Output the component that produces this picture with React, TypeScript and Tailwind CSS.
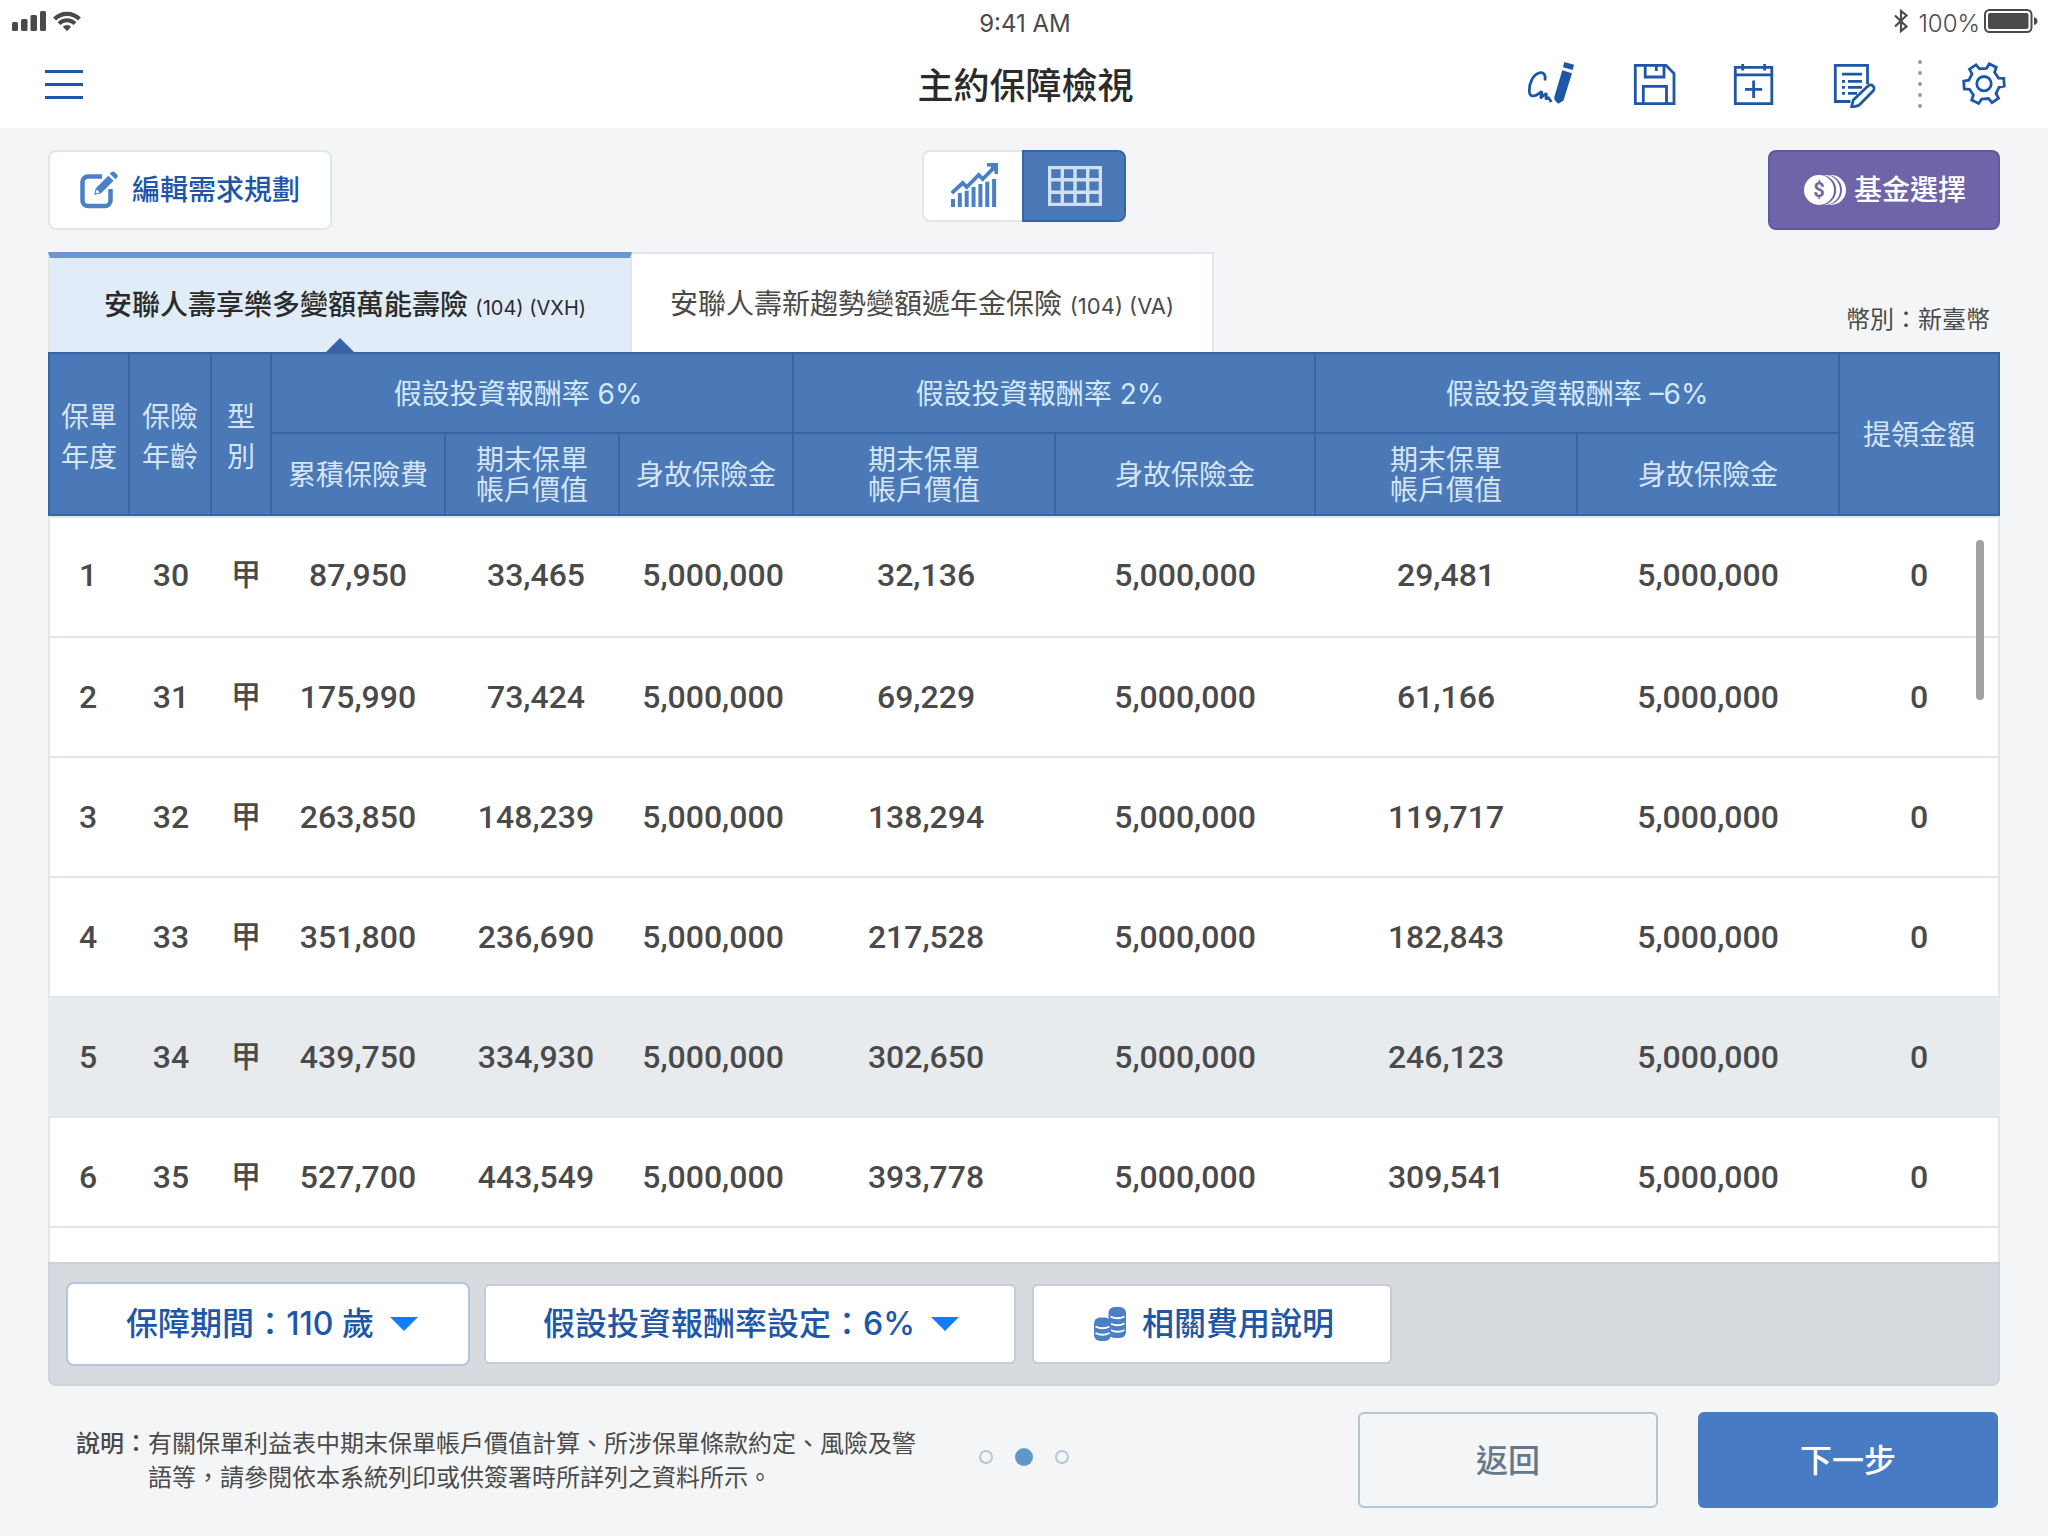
import type { ReactNode } from "react";

type Row = { year: number; age: number; type: string; cells: string[]; active?: boolean };

const DEATH = "5,000,000";

const rows: Row[] = [
  { year: 1, age: 30, type: "甲", cells: ["87,950", "33,465", DEATH, "32,136", DEATH, "29,481", DEATH, "0"] },
  { year: 2, age: 31, type: "甲", cells: ["175,990", "73,424", DEATH, "69,229", DEATH, "61,166", DEATH, "0"] },
  { year: 3, age: 32, type: "甲", cells: ["263,850", "148,239", DEATH, "138,294", DEATH, "119,717", DEATH, "0"] },
  { year: 4, age: 33, type: "甲", cells: ["351,800", "236,690", DEATH, "217,528", DEATH, "182,843", DEATH, "0"] },
  { year: 5, age: 34, type: "甲", cells: ["439,750", "334,930", DEATH, "302,650", DEATH, "246,123", DEATH, "0"], active: true },
  { year: 6, age: 35, type: "甲", cells: ["527,700", "443,549", DEATH, "393,778", DEATH, "309,541", DEATH, "0"] },
];

const colWidths = [
  "w-[82px]",
  "w-[82px]",
  "w-[60px]",
  "w-[174px]",
  "w-[174px]",
  "w-[174px]",
  "w-[262px]",
  "w-[260px]",
  "w-[262px]",
  "w-[262px]",
  "w-[160px]",
];

const cellInsets = ["pr-[2px]", "pl-[6px]", "pl-3", "pl-[2px]", "pr-[2px]", "pr-[2px]", "pr-[2px]", "pr-[2px]"];

function gearPath(cx: number, cy: number) {
  const points: string[] = [];
  const add = (r: number, deg: number) => {
    const a = (deg * Math.PI) / 180;
    points.push(`${(cx + r * Math.sin(a)).toFixed(1)} ${(cy - r * Math.cos(a)).toFixed(1)}`);
  };
  for (let i = 0; i < 6; i++) {
    const mid = 26 + i * 60;
    add(15.5, mid - 17);
    add(20.5, mid - 11);
    add(20.5, mid + 11);
    add(15.5, mid + 17);
  }
  return `M${points.join("L")}Z`;
}

function SignalIcon() {
  return (
    <svg width="34" height="20" viewBox="0 0 34 20" fill="#4a4a4a" aria-hidden="true">
      <rect x="0" y="11" width="6" height="9" rx="1.5" />
      <rect x="9" y="8" width="6.5" height="12" rx="1.5" />
      <rect x="18.500" y="4" width="6.500" height="16" rx="1.5" />
      <rect x="28" y="0" width="6" height="20" rx="1.5" />
    </svg>
  );
}

function WifiIcon() {
  return (
    <svg width="28" height="20" viewBox="0 0 28 20" fill="none" stroke="#4a4a4a" aria-hidden="true">
      <path d="M1.600 8A17.500 17.500 0 0 1 26.400 8" strokeWidth="4.200" />
      <path d="M6 12.600A11.300 11.300 0 0 1 22 12.600" strokeWidth="4" />
      <path d="M9.800 15.800Q14 12.400 18.200 15.800L14 20.200z" fill="#4a4a4a" stroke="none" />
    </svg>
  );
}

function BluetoothIcon() {
  return (
    <svg width="14" height="24" viewBox="0 0 14 24" fill="none" stroke="#4a4a4a" strokeWidth="2.200" aria-hidden="true">
      <path d="M1 6.500L12.500 17.500L7 22V2L12.500 6.500L1 17.500" />
    </svg>
  );
}

function BatteryIcon() {
  return (
    <svg width="54" height="24" viewBox="0 0 54 24" aria-hidden="true">
      <rect x="1" y="1" width="46.500" height="22" rx="4.500" fill="none" stroke="#4a4a4a" strokeWidth="2" />
      <rect x="4" y="4" width="40.500" height="16" rx="2" fill="#4a4a4a" />
      <path d="M50 8Q53.500 9 53.500 12T50 16z" fill="#4a4a4a" />
    </svg>
  );
}

function SignIcon() {
  return (
    <svg className="overflow-visible" width="44" height="48" viewBox="0 0 44 48" fill="none" aria-hidden="true">
      <path
        d="M13 20.500C14 14.500 11.500 12 7.500 12.800C1 14.500-3 23-2.700 31C-2.500 38.500 3.500 36.500 9.300 31.800C11 32.500 8 37 8.800 37.600C10.500 37 11.500 34.500 14 33.800C15.500 34.500 12.500 39 14.800 38.600L16.500 37.800L19.300 42"
        stroke="#1e56a8"
        strokeWidth="2.800"
        strokeLinejoin="round"
      />
      <path d="M30.300 10.300L40 13.300L31.500 40.500L26.300 43.700L22.500 40L22.300 37z" fill="#1e56a8" />
      <path d="M32.300 2L42 4.700L40.700 10L31 7.300z" fill="#1e56a8" />
    </svg>
  );
}

function LineIcon({ children }: { children: ReactNode }) {
  return (
    <svg width="44" height="48" viewBox="0 0 44 48" fill="none" stroke="#1e56a8" strokeWidth="2.800" aria-hidden="true">
      {children}
    </svg>
  );
}

function EditIcon() {
  return (
    <svg width="38" height="38" viewBox="0 0 38 38" fill="none" aria-hidden="true">
      <path
        d="M22 5.500H8A5.500 5.500 0 0 0 2.500 11V29.500A5.500 5.500 0 0 0 8 35H25A5.500 5.500 0 0 0 30.500 29.500V18"
        stroke="#4b80c9"
        strokeWidth="4.500"
      />
      <path
        d="M13.500 24.500L15.300 17.200L28.300 4.200L34 9.800L21 22.800zM17 19.200L16.200 21.900L18.900 21.200z"
        fill="#4b80c9"
        fillRule="evenodd"
        stroke="#fff"
        strokeWidth="1"
      />
      <path d="M29.800 2.800L31.500 1Q33 0 34.500 1L37.200 3.800Q38.200 5 37.200 6.500L35.400 8.300z" fill="#4b80c9" />
    </svg>
  );
}

function ChartIcon() {
  const tops = [36, 30, 27.7, 24, 21, 18.7, 16];
  return (
    <svg width="48" height="44" viewBox="0 0 48 44" aria-hidden="true">
      {tops.map((y, i) => (
        <rect key={y} x={i * 6.85} y={y} width="4" height={44 - y} fill="#4b80c9" />
      ))}
      <path d="M.8 30L11.700 20L15.700 24L27.700 12L31.700 16L44 3.700" fill="none" stroke="#4b80c9" strokeWidth="3.800" />
      <path d="M36 0H47V11H43.500V8L39 3.500H36z" fill="#4b80c9" />
    </svg>
  );
}

function GridIcon() {
  return (
    <svg width="54" height="40" viewBox="0 0 54 40" fill="none" stroke="#cfe0f1" strokeWidth="3.400" aria-hidden="true">
      <path d="M1.600 1.600H52.400V38.400H1.600zM1.600 13.800H52.400M1.600 26.200H52.400M14.300 1.600V38.400M27 1.600V38.400M39.700 1.600V38.400" />
    </svg>
  );
}

function FundIcon() {
  return (
    <svg width="42" height="30" viewBox="0 0 42 30" aria-hidden="true">
      <circle cx="27" cy="15" r="15" fill="#fff" />
      <circle cx="23" cy="15" r="15" fill="#7064a9" />
      <circle cx="21" cy="15" r="15" fill="#fff" />
      <circle cx="17" cy="15" r="15.200" fill="#7064a9" />
      <circle cx="15" cy="15" r="15" fill="#fff" />
      <text x="15" y="22" textAnchor="middle" fill="#7064a9" className="font-['Roboto',sans-serif] text-[20px] font-bold">
        $
      </text>
    </svg>
  );
}

function CoinsIcon() {
  return (
    <svg width="32" height="34" viewBox="0 0 32 34" aria-hidden="true">
      <rect x="14.500" y="0" width="17.500" height="31" rx="6" fill="#4b80c9" />
      <g fill="none" stroke="#fff" strokeWidth="1.800">
        <path d="M16.500 9.500Q23.500 13 30.500 9.500M16.500 16.500Q23.500 20 30.500 16.500M16.500 23Q23.500 26.500 30.500 23" />
      </g>
      <rect x="0" y="10.500" width="17" height="23.500" rx="6" fill="#4b80c9" />
      <g fill="none" stroke="#fff" strokeWidth="1.800">
        <path d="M1.500 19.500Q8.500 23 15.500 19.500M1.500 26Q8.500 29.500 15.500 26" />
      </g>
    </svg>
  );
}

function Caret() {
  return (
    <svg className="pointer-events-none" width="28" height="14" viewBox="0 0 28 14" fill="#127cff" aria-hidden="true">
      <path d="M0 0H28L14 14z" />
    </svg>
  );
}

function StatusBar() {
  return (
    <div className="grid h-[42px] grid-cols-[1fr_auto_1fr] items-center pr-[10px] pl-3 text-2xl text-[#4a4a4a]">
      <div className="flex items-center gap-[7px]">
        <SignalIcon />
        <WifiIcon />
      </div>
      <span className="pt-[6px]">9:41 AM</span>
      <div className="flex items-center justify-end">
        <BluetoothIcon />
        <span className="pt-[6px] pr-1 pl-[10px] font-light">100%</span>
        <BatteryIcon />
      </div>
    </div>
  );
}

function NavBar() {
  return (
    <div className="grid h-[86px] grid-cols-[1fr_auto_1fr] items-center pr-[42px] pb-[2px] pl-[45px]">
      <button type="button" aria-label="選單" className="flex w-[38px] flex-col gap-[10px]">
        <span className="h-[3px] w-full bg-[#1e56a8]" />
        <span className="h-[3px] w-full bg-[#1e56a8]" />
        <span className="h-[3px] w-full bg-[#1e56a8]" />
      </button>
      <h1 className="pt-1 text-4xl font-medium text-[#2b2b2b]">主約保障檢視</h1>
      <div className="flex items-center justify-end">
        <div className="flex gap-14">
          <button type="button" aria-label="簽名">
            <SignIcon />
          </button>
          <button type="button" aria-label="儲存">
            <LineIcon>
              <path d="M3.300 5.300H34L42 13.500V43.700H3.300zM13.200 5.300V17H32V5.300M24.300 5V11M11.300 43.700V26.300H34.500V43.700" />
            </LineIcon>
          </button>
          <button type="button" aria-label="新增">
            <LineIcon>
              <path d="M3.300 7.300H39.800V43.700H3.300zM3.300 14.800H39.800M10.700 4V10.500M32.700 4V10.500M21.600 20.500V38M13 29.300H30.200" />
            </LineIcon>
          </button>
          <button type="button" aria-label="紀錄">
            <LineIcon>
              <path d="M35.500 24V5.300H3.300V41.500H18.500M10 14.200H30M10 21.300H13M16 21.300H30M10 27.300H13M16 27.300H30M10 33.300H13M16 33.300H25" />
              <path
                d="M19.500 47.300L21.300 40L36 26A3.500 3.500 0 0 1 41 31L27 45.300z"
                fill="#fff"
                strokeLinejoin="round"
              />
            </LineIcon>
          </button>
        </div>
        <div className="mr-10 ml-[42px] flex flex-col gap-[7px]">
          <span className="size-1 rounded-full bg-[#9b9b9b]" />
          <span className="size-1 rounded-full bg-[#9b9b9b]" />
          <span className="size-1 rounded-full bg-[#9b9b9b]" />
          <span className="size-1 rounded-full bg-[#9b9b9b]" />
          <span className="size-1 rounded-full bg-[#9b9b9b]" />
        </div>
        <button type="button" aria-label="設定">
          <LineIcon>
            <path d={gearPath(22, 23.7)} />
            <circle cx="22" cy="23.700" r="7.200" />
          </LineIcon>
        </button>
      </div>
    </div>
  );
}

function Toolbar() {
  return (
    <div className="grid grid-cols-[1fr_auto_1fr] items-start">
      <button
        type="button"
        className="flex h-20 w-[284px] items-center justify-center gap-[14px] rounded-lg border-2 border-[#e3e7eb] bg-white text-[28px] font-medium text-[#1e56a8]"
      >
        <EditIcon />
        編輯需求規劃
      </button>
      <div className="flex">
        <button
          type="button"
          aria-label="圖表"
          aria-pressed="false"
          className="flex h-18 w-[100px] items-center justify-center rounded-l-lg border-2 border-r-0 border-[#e3e7eb] bg-white pb-[2px] pl-1"
        >
          <ChartIcon />
        </button>
        <button
          type="button"
          aria-label="表格"
          aria-pressed="true"
          className="flex h-18 w-[104px] items-center justify-center rounded-r-lg border-2 border-[#3565a6] bg-[#4b79b7] pl-[2px]"
        >
          <GridIcon />
        </button>
      </div>
      <button
        type="button"
        className="flex h-20 w-[232px] items-center justify-center gap-2 justify-self-end rounded-lg border-2 border-[#6356a2] bg-[#7064a9] pl-[2px] text-[28px] font-medium text-white"
      >
        <FundIcon />
        基金選擇
      </button>
    </div>
  );
}

function Tabs() {
  return (
    <div className="flex items-end justify-between">
      <div role="tablist" className="flex">
        <button
          type="button"
          role="tab"
          aria-selected="true"
          className="relative flex h-[100px] w-[584px] items-center justify-center border-x-2 border-t-[6px] border-x-[#e3e7eb] border-t-[#6c97d1] bg-[#e0ecf8] pl-[10px] text-[28px] text-[#2b2b2b]"
        >
          <span className="font-medium">
            安聯人壽享樂多變額萬能壽險 <span className="text-xl font-normal">(104) (VXH)</span>
          </span>
          <svg className="absolute bottom-0 left-1/2 -translate-x-1/2" width="28" height="14" viewBox="0 0 28 14" aria-hidden="true">
            <path d="M14 0L28 14H0z" fill="#3565a6" />
          </svg>
        </button>
        <button
          type="button"
          role="tab"
          aria-selected="false"
          className="flex h-[100px] w-[582px] items-center justify-center border-t-2 border-r-2 border-[#e3e7eb] bg-white pt-[2px] text-[28px] text-[#4a4a4a]"
        >
          <span>
            安聯人壽新趨勢變額遞年金保險 <span className="text-[22px]">(104) (VA)</span>
          </span>
        </button>
      </div>
      <p className="pr-[10px] pb-4 text-2xl text-[#4a4a4a]">幣別：新臺幣</p>
    </div>
  );
}

function PolicyTable() {
  return (
    <div className="relative border-r-2 border-l-2 border-[#e3e7eb] bg-white pb-[34px]">
      <table className="-mx-[2px] w-[calc(100%+4px)] table-fixed border-separate border-spacing-0 text-center">
        <colgroup>
          {colWidths.map((w, i) => (
            <col key={i} className={w} />
          ))}
        </colgroup>
        <thead className="bg-[#4b79b7] text-[28px] leading-[30px] text-[#d5e4f3] [&_th]:border-r-2 [&_th]:border-b-2 [&_th]:border-[#3565a6] [&_th]:font-normal">
          <tr className="h-[82px] [&_th]:border-t-2">
            <th rowSpan={2} scope="col" className="border-l-2 p-0 pt-[6px] leading-10">保單<br />年度</th>
            <th rowSpan={2} scope="col" className="p-0 pt-[6px] leading-10">保險<br />年齡</th>
            <th rowSpan={2} scope="col" className="p-0 pt-[6px] leading-10">型<br />別</th>
            <th colSpan={3} scope="colgroup" className="p-0 pt-[2px] pr-7 text-[#d3e9fb]">假設投資報酬率 6%</th>
            <th colSpan={2} scope="colgroup" className="p-0 pt-[2px] pr-7 text-[#d3e9fb]">假設投資報酬率 2%</th>
            <th colSpan={2} scope="colgroup" className="p-0 pt-[2px] text-[#d3e9fb]">假設投資報酬率 –6%</th>
            <th rowSpan={2} scope="col" className="p-0 pt-[2px]">提領金額</th>
          </tr>
          <tr className="h-[82px] [&_th]:p-0 [&_th]:pt-[2px]">
            <th scope="col">累積保險費</th>
            <th scope="col">期末保單<br />帳戶價值</th>
            <th scope="col">身故保險金</th>
            <th scope="col">期末保單<br />帳戶價值</th>
            <th scope="col">身故保險金</th>
            <th scope="col">期末保單<br />帳戶價值</th>
            <th scope="col">身故保險金</th>
          </tr>
        </thead>
        <tbody className="font-['Roboto','Noto_Sans_CJK_TC',sans-serif] text-[32px] leading-10 font-medium text-[#4a4a4a] [&_td]:border-b-2 [&_td]:border-[#e3e7eb]">
          {rows.map((row, i) => (
            <tr
              key={row.year}
              className={
                row.active
                  ? "h-[120px] bg-[#e7ebee]"
                  : i === 0
                    ? "h-[122px] [&_td]:border-t-2 [&_td]:pb-1"
                    : i === rows.length - 1
                      ? "h-[110px] [&_td]:pt-[10px]"
                      : "h-[120px]"
              }
            >
              <td className="pr-[2px]">{row.year}</td>
              <td>{row.age}</td>
              <td className="pl-2 text-[30px]">{row.type}</td>
              {row.cells.map((value, c) => (
                <td key={c} className={cellInsets[c]}>
                  {value}
                </td>
              ))}
            </tr>
          ))}
        </tbody>
      </table>
      <div className="absolute top-[188px] right-[14px] h-40 w-2 rounded-full bg-[#a3a3a3]" />
    </div>
  );
}

function OptionsBar() {
  return (
    <div className="flex h-[124px] items-center gap-[14px] rounded-b-lg border-2 border-[#cbd3db] bg-[#d7dbe0] px-4 text-[32px] font-medium text-[#1e56a8]">
      <label className="flex h-[84px] w-[404px] items-center justify-center rounded-lg border-2 border-[#b3c5d8] bg-white pl-2">
        保障期間：
        <select className="appearance-none bg-transparent pr-4 [field-sizing:content]">
          <option>110 歲</option>
        </select>
        <Caret />
      </label>
      <label className="flex h-20 w-[532px] items-center justify-center rounded-md border-2 border-[#c5ccd3] bg-white pl-[2px]">
        假設投資報酬率設定：
        <select className="appearance-none bg-transparent pr-4 [field-sizing:content]">
          <option>6%</option>
        </select>
        <Caret />
      </label>
      <button
        type="button"
        className="ml-[2px] flex h-20 w-[360px] items-center justify-center gap-4 rounded-md border-2 border-[#c5ccd3] bg-white pl-1"
      >
        <CoinsIcon />
        相關費用說明
      </button>
    </div>
  );
}

function Footer() {
  return (
    <footer className="grid grid-cols-[1fr_auto_1fr] items-center pt-[26px] pb-7">
      <div className="flex pt-[2px] pl-7 text-2xl leading-[34px] text-[#4a4a4a]">
        <strong className="shrink-0 font-medium">說明：</strong>
        <p className="max-w-[768px]">
          有關保單利益表中期末保單帳戶價值計算、所涉保單條款約定、風險及警語等，請參閱依本系統列印或供簽署時所詳列之資料所示。
        </p>
      </div>
      <nav aria-label="分頁" className="flex items-center gap-[22px] pb-[6px]">
        <button type="button" aria-label="第 1 頁" className="size-[14px] rounded-full border-2 border-[#b4c6d6]" />
        <button type="button" aria-label="第 2 頁" aria-current="page" className="size-[18px] rounded-full bg-[#5f97c9]" />
        <button type="button" aria-label="第 3 頁" className="size-[14px] rounded-full border-2 border-[#b4c6d6]" />
      </nav>
      <div className="flex justify-end gap-10 pr-[2px] text-[32px] font-medium">
        <button type="button" className="h-24 w-[300px] rounded-md border-2 border-[#b4c6d6] pt-[2px] text-[#677889]">
          返回
        </button>
        <button type="button" className="h-24 w-[300px] rounded-md bg-[#477bc4] pt-[2px] text-white">
          下一步
        </button>
      </div>
    </footer>
  );
}

export default function App() {
  return (
    <div lang="zh-Hant" className="min-h-screen bg-[#f3f5f7] font-['Inter','Noto_Sans_CJK_TC',sans-serif]">
      <header className="bg-white">
        <StatusBar />
        <NavBar />
      </header>
      <main className="px-12 pt-[22px]">
        <Toolbar />
        <div className="mt-[22px]">
          <Tabs />
          <PolicyTable />
          <OptionsBar />
        </div>
        <Footer />
      </main>
    </div>
  );
}
